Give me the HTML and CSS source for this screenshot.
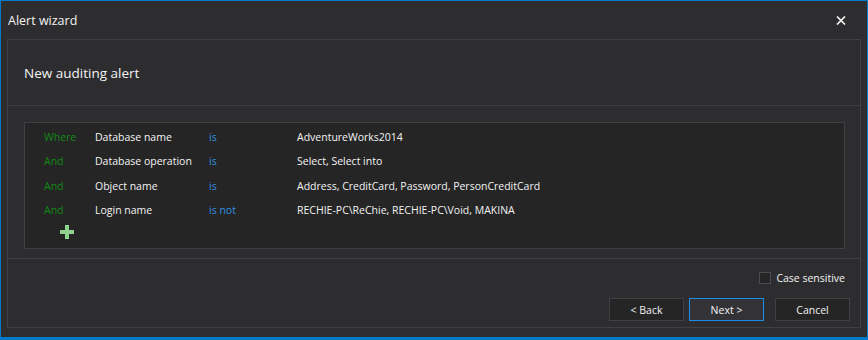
FILE: index.html
```html
<!DOCTYPE html>
<html>
<head>
<meta charset="utf-8">
<link rel="stylesheet" href="styles.css">
</head>
<body>
<div class="window">
  <div class="titlebar">
    <span class="title">Alert wizard</span>
    <svg class="close" width="10" height="9" viewBox="0 0 10 9"><path d="M1 0.5 L9 8.5 M9 0.5 L1 8.5" stroke="#f1f1f1" stroke-width="1.7"/></svg>
  </div>
  <div class="panel">
    <div class="header">New auditing alert</div>
    <div class="body">
      <div class="grid">
        <div class="row"><span class="c1">Where</span><span class="c2">Database name</span><span class="c3">is</span><span class="c4">AdventureWorks2014</span></div>
        <div class="row"><span class="c1">And</span><span class="c2">Database operation</span><span class="c3">is</span><span class="c4">Select, Select into</span></div>
        <div class="row"><span class="c1">And</span><span class="c2">Object name</span><span class="c3">is</span><span class="c4">Address, CreditCard, Password, PersonCreditCard</span></div>
        <div class="row"><span class="c1">And</span><span class="c2">Login name</span><span class="c3">is not</span><span class="c4">RECHIE-PC\ReChie, RECHIE-PC\Void, MAKINA</span></div>
        <div class="add">
          <svg width="14" height="14" viewBox="0 0 14 14"><path d="M5 0 H9 V5 H14 V9 H9 V14 H5 V9 H0 V5 H5 Z" fill="#8ed28e"/></svg>
        </div>
      </div>
    </div>
    <div class="footer">
      <label class="check"><span class="box"></span><span>Case sensitive</span></label>
      <div class="buttons">
        <button class="btn">&lt; Back</button>
        <button class="btn primary">Next &gt;</button>
        <button class="btn cancel">Cancel</button>
      </div>
    </div>
  </div>
</div>
</body>
</html>
```

FILE: styles.css
```css
html, body {
  margin: 0;
  padding: 0;
  background: #2d2d30;
}
body {
  font-family: "Open Sans", "Noto Sans", sans-serif;
  color: #f3f3f3;
}
.window {
  box-sizing: border-box;
  width: 868px;
  height: 340px;
  border: 1px solid #007acc;
  border-bottom-width: 3px;
  background: #2d2d30;
  display: flex;
  flex-direction: column;
}
.titlebar {
  height: 38px;
  display: flex;
  align-items: center;
  justify-content: space-between;
  padding: 0 21px 0 7px;
  box-sizing: border-box;
}
.title {
  font-size: 12.5px;
}
.close {
  display: block;
  margin-top: 1px;
}
.panel {
  flex: 1;
  margin: 0 6px 9px 6px;
  border: 1px solid #3f3f46;
  display: flex;
  flex-direction: column;
}
.header {
  height: 65px;
  border-bottom: 1px solid #3f3f46;
  display: flex;
  align-items: center;
  padding-left: 16px;
  font-size: 13.5px;
}
.body {
  padding: 16px 15px 9px 16px;
  border-bottom: 1px solid #3f3f46;
}
.grid {
  height: 123px;
  border: 1px solid #3f3f46;
  background: #252526;
  padding: 2px 0 0 19px;
  font-size: 10.5px;
}
.row {
  height: 24.3px;
  display: flex;
  align-items: center;
}
.c1 { width: 51px; color: #138a13; }
.c2 { width: 114px; }
.c3 { width: 88px; color: #2f8fe0; }
.add {
  padding: 3px 0 0 16px;
}
.add svg { display: block; }
.footer {
  flex: 1;
  display: flex;
  flex-direction: column;
  align-items: flex-end;
  padding: 12px 10px 0 0;
  font-size: 10.5px;
}
.check {
  display: flex;
  align-items: center;
  gap: 5px;
  margin-right: 5px;
}
.box {
  box-sizing: border-box;
  width: 12px;
  height: 12px;
  border: 1px solid #4a4a50;
  background: #252526;
}
.buttons {
  display: flex;
  gap: 5px;
  margin-top: 13px;
}
.btn {
  box-sizing: border-box;
  width: 75px;
  height: 23px;
  background: #252526;
  border: 1px solid #3f3f46;
  color: #f3f3f3;
  font-family: "Open Sans", "Noto Sans", sans-serif;
  font-size: 10.5px;
  padding: 0;
}
.btn.primary {
  background: #333337;
  border-color: #1c8ee8;
}
.btn.cancel {
  margin-left: 6px;
}
```
